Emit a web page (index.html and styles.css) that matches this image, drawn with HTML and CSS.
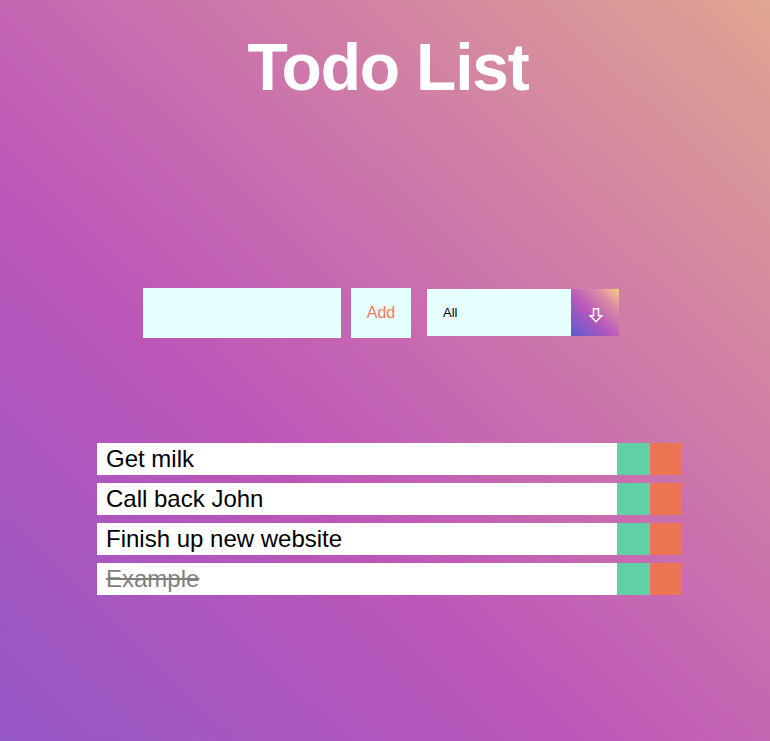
FILE: index.html
```html
<!DOCTYPE html>
<html lang="en">
<head>
<meta charset="utf-8">
<title>Todo List</title>
<link rel="stylesheet" href="styles.css">
</head>
<body>
<header class="header">
  <h1 class="title">Todo List</h1>
</header>
<form class="todo-form">
  <input class="todo-input" type="text">
  <button class="add-btn" type="button">Add</button>
  <div class="select">
    <div class="select-value">All</div>
    <div class="select-arrow">
      <svg width="14" height="15" viewBox="0 0 14 15"><path d="M4.5 0.75 H9.5 V7.75 H12.75 L7 13.75 L1.25 7.75 H4.5 Z" fill="none" stroke="#fff" stroke-width="1.5" stroke-linejoin="miter"/></svg>
    </div>
  </div>
</form>
<div class="todo-container">
  <ul class="todo-list">
    <li class="todo"><span class="todo-item">Get milk</span><button class="complete-btn"></button><button class="trash-btn"></button></li>
    <li class="todo"><span class="todo-item">Call back John</span><button class="complete-btn"></button><button class="trash-btn"></button></li>
    <li class="todo"><span class="todo-item">Finish up new website</span><button class="complete-btn"></button><button class="trash-btn"></button></li>
    <li class="todo completed"><span class="todo-item">Example</span><button class="complete-btn"></button><button class="trash-btn"></button></li>
  </ul>
</div>
</body>
</html>
```
FILE: styles.css
```css
* { box-sizing: border-box; }
html, body { margin: 0; padding: 0; }
body {
  min-height: 100vh;
  font-family: "Liberation Sans", Arial, sans-serif;
  background: linear-gradient(to top right, #9558c6 0%, #bb56b9 36%, #c86bb0 55%, #e0a592 100%);
  color: #fff;
}
.header {
  display: flex;
  justify-content: center;
  padding-top: 34px;
  padding-left: 6px;
}
.title {
  margin: 0;
  font-size: 66px;
  line-height: 66px;
  font-weight: bold;
  letter-spacing: -1.2px;
}
.todo-form {
  display: flex;
  justify-content: center;
  align-items: flex-start;
  margin-top: 188px;
  height: 50px;
  padding-right: 8px;
}
.todo-input {
  width: 198px;
  height: 50px;
  border: none;
  background: #e6fffe;
  padding: 0 8px;
  font-size: 16px;
  outline: none;
}
.add-btn {
  margin-left: 10px;
  width: 60px;
  height: 50px;
  border: none;
  background: #e6fffe;
  color: #ef7a56;
  font-family: "Liberation Sans", Arial, sans-serif;
  font-size: 16px;
  padding: 0;
}
.select {
  margin-left: 16px;
  margin-top: 1px;
  display: flex;
  height: 47px;
}
.select-value {
  width: 144px;
  background: #e6fffe;
  color: #000;
  font-size: 13px;
  display: flex;
  align-items: center;
  padding-left: 16px;
}
.select-arrow {
  width: 48px;
  display: flex;
  align-items: center;
  justify-content: center;
  padding-top: 5px;
  padding-left: 1px;
  background: linear-gradient(to top right, #5a5ad0 0%, #b958bb 45%, #d98aa6 75%, #f6cf80 100%);
}
.todo-container {
  display: flex;
  justify-content: center;
  margin-top: 105px;
  padding-left: 9px;
}
.todo-list {
  list-style: none;
  margin: 0;
  padding: 0;
  width: 585px;
  display: flex;
  flex-direction: column;
  gap: 8px;
}
.todo {
  display: flex;
  height: 32px;
  background: #fff;
  color: #000;
  font-size: 24px;
  line-height: 32px;
}
.todo-item {
  flex: 1;
  padding: 0 9px;
}
.complete-btn, .trash-btn {
  width: 32px;
  border: none;
  padding: 0;
}
.complete-btn { background: #62d0a6; width: 33px; }
.trash-btn { background: #ec7554; }
.completed .todo-item {
  text-decoration: line-through;
  opacity: 0.5;
}
```
